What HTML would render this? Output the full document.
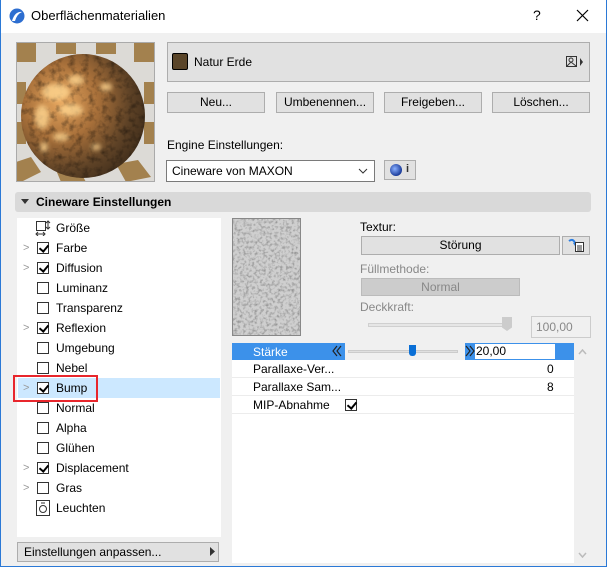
<!DOCTYPE html>
<html><head><meta charset="utf-8"><style>
*{box-sizing:border-box;margin:0;padding:0}
body{width:607px;height:567px;overflow:hidden;background:#f0f0f0;font-family:"Liberation Sans","Noto Sans CJK JP",sans-serif;font-size:12px;color:#000;position:relative}
.a{position:absolute}
.win{position:absolute;left:0;top:0;width:607px;height:567px;border:1px solid #2b79d6;border-top:none}
.title{left:1px;top:0;width:605px;height:33px;background:#fff}
.btn{position:absolute;background:#e1e1e1;border:1px solid #adadad;text-align:center;line-height:18px}
.row{position:absolute;left:18px;width:202px;height:20px;line-height:20px}
.cb{position:absolute;left:19px;top:4px;width:12px;height:12px;border:1px solid #333;background:#fff}
.cb.c::after{content:"";position:absolute;left:3px;top:0px;width:4px;height:7px;border:solid #000;border-width:0 2px 2px 0;transform:rotate(40deg)}
.arr{position:absolute;left:5px;top:0;color:#999;font-size:11px}
.lbl{position:absolute;left:38px}
.prow{position:absolute;left:232px;width:342px;height:18px;line-height:18px;border-bottom:1px solid #ececec}
</style></head><body>
<div class="win"></div>
<div class="a title"></div>
<svg class="a" style="left:9px;top:8px" width="16" height="16"><circle cx="8" cy="8" r="7.5" fill="#2d6ed0"/><path d="M3 13 Q6 3 13 4 Q8 6 6 13Z" fill="#fff"/></svg>
<div class="a" style="left:31px;top:8px;font-size:13px">Oberflächenmaterialien</div>
<div class="a" style="left:533px;top:7px;font-size:14px">?</div>
<svg class="a" style="left:576px;top:9px" width="13" height="13"><path d="M1 1L12 12M12 1L1 12" stroke="#000" stroke-width="1.2"/></svg>

<svg class="a" style="left:16px;top:42px" width="139" height="140">
<defs>
<filter id="n1" x="0" y="0" width="100%" height="100%"><feTurbulence type="fractalNoise" baseFrequency="0.15" numOctaves="3" seed="4"/><feColorMatrix type="matrix" values="0 0 0 0 0  0 0 0 0 0  0 0 0 0 0  0 0 0 -2 1.1"/></filter>
<filter id="bl"><feGaussianBlur stdDeviation="2.5"/></filter>
<radialGradient id="sg" cx="0.32" cy="0.38" r="0.75"><stop offset="0" stop-color="#e8a860"/><stop offset="0.4" stop-color="#a8703a"/><stop offset="0.75" stop-color="#5e4226"/><stop offset="1" stop-color="#3e2c1a"/></radialGradient>
<clipPath id="cc"><circle cx="67" cy="74" r="62"/></clipPath>
</defs>
<rect width="139" height="140" fill="#dcdad6"/>
<g fill="#a3814e">
<rect x="0" y="0" width="20" height="20"/><rect x="40" y="0" width="20" height="12"/><rect x="80" y="0" width="20" height="12"/><rect x="118" y="0" width="21" height="20"/>
<rect x="0" y="40" width="10" height="22"/><rect x="128" y="40" width="11" height="22"/>
<rect x="0" y="80" width="10" height="22"/><rect x="128" y="80" width="11" height="22"/>
<polygon points="0,120 15,115 25,130 5,140 0,140"/><polygon points="40,128 60,122 70,140 45,140"/><polygon points="100,122 122,118 135,135 110,140"/>
</g>
<circle cx="67" cy="74" r="62" fill="url(#sg)"/>
<g clip-path="url(#cc)">
<rect width="139" height="140" fill="#2a1c0e" filter="url(#n1)" opacity="0.45"/>
<g fill="#ffd690" opacity="0.8" filter="url(#bl)">
<ellipse cx="40" cy="50" rx="14" ry="8"/><ellipse cx="26" cy="75" rx="7" ry="12"/><ellipse cx="60" cy="38" rx="8" ry="5"/><ellipse cx="55" cy="68" rx="12" ry="6"/><ellipse cx="90" cy="45" rx="6" ry="4"/><ellipse cx="45" cy="95" rx="8" ry="4"/><ellipse cx="80" cy="105" rx="5" ry="3"/><ellipse cx="28" cy="105" rx="4" ry="5"/>
</g>
</g>
<rect x="0.5" y="0.5" width="138" height="139" fill="none" stroke="#aaa"/>
</svg>

<div class="a" style="left:167px;top:42px;width:423px;height:40px;background:#e1e1e1;border:1px solid #adadad"></div>
<div class="a" style="left:172px;top:53px;width:16px;height:17px;background:#5a4529;border:1px solid #000;border-radius:2px"></div>
<div class="a" style="left:194px;top:55px">Natur Erde</div>
<svg class="a" style="left:566px;top:55px" width="20" height="14"><rect x="0.5" y="1.5" width="10" height="10" fill="none" stroke="#333"/><circle cx="5" cy="5" r="2" fill="none" stroke="#333"/><path d="M1 11L5 7L10 11" fill="none" stroke="#333"/><path d="M14 3L17 7L14 11Z" fill="#333"/></svg>

<div class="btn" style="left:167px;top:92px;width:98px;height:21px">Neu...</div>
<div class="btn" style="left:276px;top:92px;width:98px;height:21px">Umbenennen...</div>
<div class="btn" style="left:384px;top:92px;width:98px;height:21px">Freigeben...</div>
<div class="btn" style="left:492px;top:92px;width:98px;height:21px">Löschen...</div>

<div class="a" style="left:167px;top:138px">Engine Einstellungen:</div>
<div class="a" style="left:166px;top:160px;width:209px;height:22px;background:#fff;border:1px solid #7a7a7a;line-height:20px;padding-left:5px">Cineware von MAXON</div>
<svg class="a" style="left:358px;top:168px" width="10" height="6"><path d="M1 1L5 5L9 1" fill="none" stroke="#333"/></svg>
<div class="btn" style="left:384px;top:160px;width:32px;height:20px"></div>
<div class="a" style="left:390px;top:164px;width:12px;height:12px;border-radius:50%;background:radial-gradient(circle at 40% 40%,#8ab0ff,#1a3b9a 70%,#0a1a50)"></div>
<div class="a" style="left:406px;top:163px;font-weight:bold;font-size:11px;color:#333">i</div>

<div class="a" style="left:15px;top:192px;width:576px;height:20px;background:#d9d9d9;border-radius:3px"></div>
<svg class="a" style="left:21px;top:199px" width="8" height="6"><path d="M0 0L8 0L4 5Z" fill="#333"/></svg>
<div class="a" style="left:36px;top:195px;font-weight:bold">Cineware Einstellungen</div>

<div class="a" style="left:17px;top:218px;width:204px;height:319px;background:#fff"></div>
<div class="a" style="left:18px;top:378px;width:202px;height:20px;background:#cce8ff"></div>
<div class="row" style="top:218px"><svg class="a" style="left:17px;top:2px" width="16" height="16"><rect x="1.5" y="1.5" width="9" height="9" fill="none" stroke="#333"/><path d="M13 1V9M11 3L13 1L15 3M11 7L13 9L15 7M1 14H10M3 12L1 14L3 16M8 12L10 14L8 16" fill="none" stroke="#333"/></svg><span class="lbl">Größe</span></div>
<div class="row" style="top:238px"><span class="arr">&gt;</span><span class="cb c"></span><span class="lbl">Farbe</span></div>
<div class="row" style="top:258px"><span class="arr">&gt;</span><span class="cb c"></span><span class="lbl">Diffusion</span></div>
<div class="row" style="top:278px"><span class="cb"></span><span class="lbl">Luminanz</span></div>
<div class="row" style="top:298px"><span class="cb"></span><span class="lbl">Transparenz</span></div>
<div class="row" style="top:318px"><span class="arr">&gt;</span><span class="cb c"></span><span class="lbl">Reflexion</span></div>
<div class="row" style="top:338px"><span class="cb"></span><span class="lbl">Umgebung</span></div>
<div class="row" style="top:358px"><span class="cb"></span><span class="lbl">Nebel</span></div>
<div class="row" style="top:378px"><span class="arr">&gt;</span><span class="cb c"></span><span class="lbl">Bump</span></div>
<div class="row" style="top:398px"><span class="cb"></span><span class="lbl">Normal</span></div>
<div class="row" style="top:418px"><span class="cb"></span><span class="lbl">Alpha</span></div>
<div class="row" style="top:438px"><span class="cb"></span><span class="lbl">Glühen</span></div>
<div class="row" style="top:458px"><span class="arr">&gt;</span><span class="cb c"></span><span class="lbl">Displacement</span></div>
<div class="row" style="top:478px"><span class="arr">&gt;</span><span class="cb"></span><span class="lbl">Gras</span></div>
<div class="row" style="top:498px"><svg class="a" style="left:18px;top:2px" width="14" height="16"><rect x="0.5" y="0.5" width="13" height="15" fill="none" stroke="#333"/><circle cx="7" cy="9" r="3.5" fill="none" stroke="#333"/><path d="M5 3H9" stroke="#333"/></svg><span class="lbl">Leuchten</span></div>
<div class="a" style="left:13px;top:375px;width:85px;height:27px;border:2px solid #e8262c"></div>

<div class="btn" style="left:17px;top:542px;width:202px;height:20px;text-align:left;padding-left:6px">Einstellungen anpassen...</div>
<svg class="a" style="left:210px;top:547px" width="6" height="9"><path d="M0 0L5 4.5L0 9Z" fill="#333"/></svg>

<svg class="a" style="left:232px;top:218px" width="69" height="118">
<defs><filter id="n2" x="0" y="0" width="100%" height="100%"><feTurbulence type="fractalNoise" baseFrequency="0.35" numOctaves="2" seed="7"/><feColorMatrix type="matrix" values="0 0 0 0 0.3  0 0 0 0 0.3  0 0 0 0 0.3  0 0 0 -2.5 1.4"/></filter></defs>
<rect width="69" height="118" fill="#cfcfcf"/>
<rect width="69" height="118" filter="url(#n2)"/>
<rect x="0.5" y="0.5" width="68" height="117" fill="none" stroke="#888"/>
</svg>
<div class="a" style="left:360px;top:220px">Textur:</div>
<div class="btn" style="left:361px;top:236px;width:199px;height:19px;line-height:17px">Störung</div>
<div class="btn" style="left:562px;top:236px;width:28px;height:19px"></div>
<svg class="a" style="left:567px;top:238px" width="18" height="15"><path d="M2 3Q6 0 8 5" fill="none" stroke="#2a7de1" stroke-width="2"/><path d="M6 5L10 5L8 8Z" fill="#2a7de1"/><rect x="8.5" y="4.5" width="8" height="9" fill="#fff" stroke="#333"/><path d="M10 8H15M10 10H15M10 12H15" stroke="#333"/></svg>
<div class="a" style="left:360px;top:262px;color:#888">Füllmethode:</div>
<div class="a" style="left:361px;top:278px;width:159px;height:18px;background:#ccc;border:1px solid #bbb;color:#888;text-align:center;line-height:16px">Normal</div>
<div class="a" style="left:360px;top:300px;color:#888">Deckkraft:</div>
<div class="a" style="left:368px;top:323px;width:143px;height:4px;background:#e6e6e6;border:1px solid #d0d0d0"></div>
<div class="a" style="left:502px;top:317px;width:10px;height:14px;background:#ccc;clip-path:polygon(0 0,100% 0,100% 75%,50% 100%,0 75%)"></div>
<div class="a" style="left:531px;top:316px;width:60px;height:22px;border:1px solid #ccc;color:#888;line-height:20px;padding-left:4px">100,00</div>

<div class="a" style="left:232px;top:343px;width:342px;height:220px;background:#fff"></div>
<div class="a" style="left:232px;top:343px;width:342px;height:17px;background:#3c91ea"></div>
<div class="a" style="left:345px;top:343px;width:120px;height:17px;background:#f0f0f0"></div>
<div class="a" style="left:253px;top:345px;color:#fff">Stärke</div>
<svg class="a" style="left:332px;top:345px" width="10" height="12"><path d="M5 1L1 6L5 11M9 1L5 6L9 11" fill="none" stroke="#222" stroke-width="1.2"/></svg>
<div class="a" style="left:348px;top:350px;width:110px;height:3px;background:#e0e0e0;border:1px solid #ccc"></div>
<div class="a" style="left:409px;top:345px;width:7px;height:11px;background:#0a6fd6;border-radius:0 0 3px 3px"></div>
<svg class="a" style="left:465px;top:345px" width="10" height="12"><path d="M1 1L5 6L1 11M5 1L9 6L5 11" fill="none" stroke="#222" stroke-width="1.2"/></svg>
<div class="a" style="left:475px;top:344px;width:80px;height:15px;background:#fff;line-height:15px;padding-left:1px">20,00</div>
<div class="prow" style="top:360px"><span class="a" style="left:21px">Parallaxe-Ver...</span><span class="a" style="left:315px">0</span></div>
<div class="prow" style="top:378px"><span class="a" style="left:21px">Parallaxe Sam...</span><span class="a" style="left:315px">8</span></div>
<div class="prow" style="top:396px"><span class="a" style="left:21px">MIP-Abnahme</span><span class="cb c" style="left:113px;top:3px"></span></div>
<svg class="a" style="left:578px;top:349px" width="9" height="6"><path d="M1 5L4.5 1L8 5" fill="none" stroke="#bbb" stroke-width="1.5"/></svg>
<svg class="a" style="left:578px;top:552px" width="9" height="6"><path d="M1 1L4.5 5L8 1" fill="none" stroke="#bbb" stroke-width="1.5"/></svg>
</body></html>
